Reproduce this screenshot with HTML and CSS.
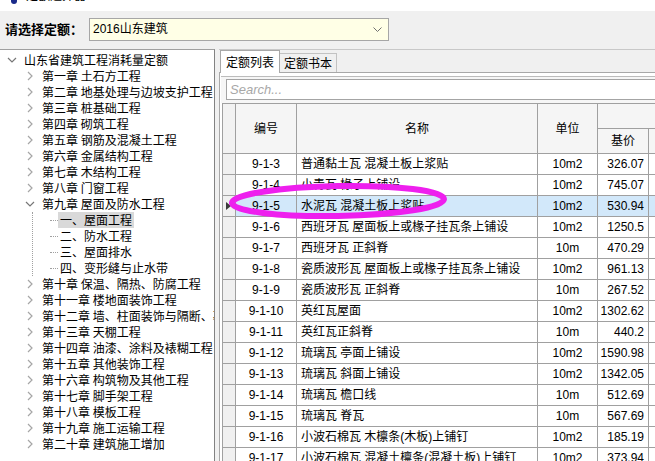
FILE: index.html
```html
<!DOCTYPE html>
<html lang="zh-CN">
<head>
<meta charset="utf-8">
<title>定额选择</title>
<link rel="stylesheet" href="styles.css">
</head>
<body>
<div class="titlebar">
  <div class="titlebar-inner"><span class="app-icon"></span><span class="title-text">定额选择器</span></div>
</div>
<div class="toolbar">
  <span class="label">请选择定额：</span>
  <div class="combo">
    <span class="combo-text">2016山东建筑</span>
    <svg class="combo-arrow" width="9" height="5" viewBox="0 0 9 5"><polyline points="0.5,0.5 4.5,4.5 8.5,0.5" fill="none" stroke="#707070" stroke-width="1"/></svg>
  </div>
</div>
<div class="main">
  <div class="tree">
    <div class="node lv0"><svg class="exp" width="14" height="16" viewBox="0 0 14 16"><polyline points="3,6 7,10 11,6" fill="none" stroke="#777" stroke-width="1.2"/></svg><span class="txt">山东省建筑工程消耗量定额</span></div>
    <div class="node lv1"><svg class="exp" width="14" height="16" viewBox="0 0 14 16"><polyline points="5,4 9,8 5,12" fill="none" stroke="#a6a6a6" stroke-width="1.2"/></svg><span class="txt">第一章 土石方工程</span></div>
    <div class="node lv1"><svg class="exp" width="14" height="16" viewBox="0 0 14 16"><polyline points="5,4 9,8 5,12" fill="none" stroke="#a6a6a6" stroke-width="1.2"/></svg><span class="txt">第二章 地基处理与边坡支护工程</span></div>
    <div class="node lv1"><svg class="exp" width="14" height="16" viewBox="0 0 14 16"><polyline points="5,4 9,8 5,12" fill="none" stroke="#a6a6a6" stroke-width="1.2"/></svg><span class="txt">第三章 桩基础工程</span></div>
    <div class="node lv1"><svg class="exp" width="14" height="16" viewBox="0 0 14 16"><polyline points="5,4 9,8 5,12" fill="none" stroke="#a6a6a6" stroke-width="1.2"/></svg><span class="txt">第四章 砌筑工程</span></div>
    <div class="node lv1"><svg class="exp" width="14" height="16" viewBox="0 0 14 16"><polyline points="5,4 9,8 5,12" fill="none" stroke="#a6a6a6" stroke-width="1.2"/></svg><span class="txt">第五章 钢筋及混凝土工程</span></div>
    <div class="node lv1"><svg class="exp" width="14" height="16" viewBox="0 0 14 16"><polyline points="5,4 9,8 5,12" fill="none" stroke="#a6a6a6" stroke-width="1.2"/></svg><span class="txt">第六章 金属结构工程</span></div>
    <div class="node lv1"><svg class="exp" width="14" height="16" viewBox="0 0 14 16"><polyline points="5,4 9,8 5,12" fill="none" stroke="#a6a6a6" stroke-width="1.2"/></svg><span class="txt">第七章 木结构工程</span></div>
    <div class="node lv1"><svg class="exp" width="14" height="16" viewBox="0 0 14 16"><polyline points="5,4 9,8 5,12" fill="none" stroke="#a6a6a6" stroke-width="1.2"/></svg><span class="txt">第八章 门窗工程</span></div>
    <div class="node lv1"><svg class="exp" width="14" height="16" viewBox="0 0 14 16"><polyline points="3,6 7,10 11,6" fill="none" stroke="#777" stroke-width="1.2"/></svg><span class="txt">第九章 屋面及防水工程</span></div>
    <div class="subtree">
      <div class="node lv2"><span class="stub"></span><span class="txt sel">一、屋面工程</span></div>
      <div class="node lv2"><span class="stub"></span><span class="txt">二、防水工程</span></div>
      <div class="node lv2"><span class="stub"></span><span class="txt">三、屋面排水</span></div>
      <div class="node lv2"><span class="stub"></span><span class="txt">四、变形缝与止水带</span></div>
    </div>
    <div class="node lv1"><svg class="exp" width="14" height="16" viewBox="0 0 14 16"><polyline points="5,4 9,8 5,12" fill="none" stroke="#a6a6a6" stroke-width="1.2"/></svg><span class="txt">第十章 保温、隔热、防腐工程</span></div>
    <div class="node lv1"><svg class="exp" width="14" height="16" viewBox="0 0 14 16"><polyline points="5,4 9,8 5,12" fill="none" stroke="#a6a6a6" stroke-width="1.2"/></svg><span class="txt">第十一章 楼地面装饰工程</span></div>
    <div class="node lv1"><svg class="exp" width="14" height="16" viewBox="0 0 14 16"><polyline points="5,4 9,8 5,12" fill="none" stroke="#a6a6a6" stroke-width="1.2"/></svg><span class="txt">第十二章 墙、柱面装饰与隔断、幕墙工程</span></div>
    <div class="node lv1"><svg class="exp" width="14" height="16" viewBox="0 0 14 16"><polyline points="5,4 9,8 5,12" fill="none" stroke="#a6a6a6" stroke-width="1.2"/></svg><span class="txt">第十三章 天棚工程</span></div>
    <div class="node lv1"><svg class="exp" width="14" height="16" viewBox="0 0 14 16"><polyline points="5,4 9,8 5,12" fill="none" stroke="#a6a6a6" stroke-width="1.2"/></svg><span class="txt">第十四章 油漆、涂料及裱糊工程</span></div>
    <div class="node lv1"><svg class="exp" width="14" height="16" viewBox="0 0 14 16"><polyline points="5,4 9,8 5,12" fill="none" stroke="#a6a6a6" stroke-width="1.2"/></svg><span class="txt">第十五章 其他装饰工程</span></div>
    <div class="node lv1"><svg class="exp" width="14" height="16" viewBox="0 0 14 16"><polyline points="5,4 9,8 5,12" fill="none" stroke="#a6a6a6" stroke-width="1.2"/></svg><span class="txt">第十六章 构筑物及其他工程</span></div>
    <div class="node lv1"><svg class="exp" width="14" height="16" viewBox="0 0 14 16"><polyline points="5,4 9,8 5,12" fill="none" stroke="#a6a6a6" stroke-width="1.2"/></svg><span class="txt">第十七章 脚手架工程</span></div>
    <div class="node lv1"><svg class="exp" width="14" height="16" viewBox="0 0 14 16"><polyline points="5,4 9,8 5,12" fill="none" stroke="#a6a6a6" stroke-width="1.2"/></svg><span class="txt">第十八章 模板工程</span></div>
    <div class="node lv1"><svg class="exp" width="14" height="16" viewBox="0 0 14 16"><polyline points="5,4 9,8 5,12" fill="none" stroke="#a6a6a6" stroke-width="1.2"/></svg><span class="txt">第十九章 施工运输工程</span></div>
    <div class="node lv1"><svg class="exp" width="14" height="16" viewBox="0 0 14 16"><polyline points="5,4 9,8 5,12" fill="none" stroke="#a6a6a6" stroke-width="1.2"/></svg><span class="txt">第二十章 建筑施工增加</span></div>
  </div>
  <div class="right">
    <div class="tabs">
      <div class="tab active">定额列表</div>
      <div class="tab">定额书本</div>
    </div>
    <div class="tabpage">
      <div class="searchbar"><div class="search">Search...</div></div>
      <div class="grid">
        <div class="c rh hdr-span"></div>
        <div class="c hd hdr-span">编号</div>
        <div class="c hd hdr-span">名称</div>
        <div class="c hd hdr-span">单位</div>
        <div class="c hd group"></div>
        <div class="c hd">基价</div>
        <div class="c hd"></div>

        <div class="c rh"></div><div class="c code">9-1-3</div><div class="c name">普通黏土瓦 混凝土板上浆贴</div><div class="c unit">10m2</div><div class="c num">326.07</div><div class="c"></div>
        <div class="c rh"></div><div class="c code">9-1-4</div><div class="c name">小青瓦 椽子上铺设</div><div class="c unit">10m2</div><div class="c num">745.07</div><div class="c"></div>
        <div class="c rh cur"><span class="tri"></span></div><div class="c code s">9-1-5</div><div class="c name s">水泥瓦 混凝土板上浆贴</div><div class="c unit s">10m2</div><div class="c num s">530.94</div><div class="c s"></div>
        <div class="c rh"></div><div class="c code">9-1-6</div><div class="c name">西班牙瓦 屋面板上或椽子挂瓦条上铺设</div><div class="c unit">10m2</div><div class="c num">1250.5</div><div class="c"></div>
        <div class="c rh"></div><div class="c code">9-1-7</div><div class="c name">西班牙瓦 正斜脊</div><div class="c unit">10m</div><div class="c num">470.29</div><div class="c"></div>
        <div class="c rh"></div><div class="c code">9-1-8</div><div class="c name">瓷质波形瓦 屋面板上或椽子挂瓦条上铺设</div><div class="c unit">10m2</div><div class="c num">961.13</div><div class="c"></div>
        <div class="c rh"></div><div class="c code">9-1-9</div><div class="c name">瓷质波形瓦 正斜脊</div><div class="c unit">10m</div><div class="c num">267.52</div><div class="c"></div>
        <div class="c rh"></div><div class="c code">9-1-10</div><div class="c name">英红瓦屋面</div><div class="c unit">10m2</div><div class="c num">1302.62</div><div class="c"></div>
        <div class="c rh"></div><div class="c code">9-1-11</div><div class="c name">英红瓦正斜脊</div><div class="c unit">10m</div><div class="c num">440.2</div><div class="c"></div>
        <div class="c rh"></div><div class="c code">9-1-12</div><div class="c name">琉璃瓦 亭面上铺设</div><div class="c unit">10m2</div><div class="c num">1590.98</div><div class="c"></div>
        <div class="c rh"></div><div class="c code">9-1-13</div><div class="c name">琉璃瓦 斜面上铺设</div><div class="c unit">10m2</div><div class="c num">1342.05</div><div class="c"></div>
        <div class="c rh"></div><div class="c code">9-1-14</div><div class="c name">琉璃瓦 檐口线</div><div class="c unit">10m</div><div class="c num">512.69</div><div class="c"></div>
        <div class="c rh"></div><div class="c code">9-1-15</div><div class="c name">琉璃瓦 脊瓦</div><div class="c unit">10m</div><div class="c num">567.69</div><div class="c"></div>
        <div class="c rh"></div><div class="c code">9-1-16</div><div class="c name">小波石棉瓦 木檩条(木板)上铺钉</div><div class="c unit">10m2</div><div class="c num">185.19</div><div class="c"></div>
        <div class="c rh"></div><div class="c code">9-1-17</div><div class="c name">小波石棉瓦 混凝土檩条(混凝土板)上铺钉</div><div class="c unit">10m2</div><div class="c num">373.94</div><div class="c"></div>
      </div>
    </div>
  </div>
</div>
<svg class="mark" width="240" height="50" viewBox="0 0 240 50"><ellipse cx="118" cy="23" rx="106" ry="15" transform="rotate(-1 118 23)" fill="none" stroke="#ee1fee" stroke-width="6"/></svg>
</body>
</html>
```
FILE: styles.css
```css
* { box-sizing: border-box; }
html, body { margin: 0; padding: 0; }
body {
  width: 655px;
  height: 461px;
  overflow: hidden;
  background: #f0f0f0;
  font-family: "Liberation Sans", "Noto Sans CJK SC", sans-serif;
  font-size: 12px;
  color: #000;
  position: relative;
}
.titlebar {
  height: 11px;
  background: #fff;
  overflow: hidden;
}
.titlebar-inner {
  margin-top: -12px;
  height: 16px;
  display: flex;
  align-items: center;
  padding-left: 11px;
  gap: 9px;
  line-height: 16px;
}
.app-icon {
  width: 6px;
  height: 16px;
  background: #1a2a8a;
  border-radius: 0 0 3px 3px;
}
.title-text { font-size: 12px; color: #000; }

.toolbar {
  height: 38px;
  display: flex;
  align-items: center;
  padding-left: 5px;
  padding-bottom: 2px;
}
.label {
  font-family: "Noto Sans CJK SC", sans-serif;
  font-weight: bold;
  font-size: 13px;
  width: 84px;
  line-height: 16px;
}
.combo {
  width: 300px;
  height: 23px;
  border: 1px solid #a6a6a6;
  background: #ffffe6;
  display: flex;
  align-items: center;
  justify-content: space-between;
  padding: 0 6px 0 3px;
}
.combo-text { font-size: 12px; line-height: 16px; }

.main {
  display: flex;
  height: 412px;
}
.tree {
  width: 215px;
  flex: none;
  background: #fff;
  border-top: 1px solid #a0a0a0;
  border-right: 1px solid #828282;
  padding-top: 2px;
  overflow: hidden;
  font-family: "Noto Sans CJK SC", sans-serif;
}
.node {
  height: 16px;
  display: flex;
  align-items: center;
  white-space: nowrap;
  line-height: 16px;
}
.exp { flex: none; }
.node .txt { margin-left: 5px; }
.lv0 { padding-left: 5px; }
.lv1 { padding-left: 23px; }
.lv1 .txt { margin-left: 5px; }
.subtree {
  margin-left: 32px;
  border-left: 1px dotted #a0a0a0;
}
.lv2 { padding-left: 17px; }
.stub {
  width: 8px;
  border-top: 1px dotted #a0a0a0;
}
.lv2 .txt { margin-left: 0; padding: 0 2px; }
.txt.sel { background: #d9d9d9; }

.right {
  flex: 1;
  margin-left: 4px;
  display: flex;
  flex-direction: column;
  min-width: 0;
  border-top: 1px solid #c8c8c8;
}
.tabs {
  height: 22px;
  display: flex;
  align-items: flex-end;
  padding-left: 1px;
  font-family: "Noto Sans CJK SC", sans-serif;
}
.tab {
  height: 19px;
  padding: 0 4px;
  border: 1px solid #c2c2c2;
  border-bottom: none;
  background: #f0f0f0;
  line-height: 18px;
  margin-left: -1px;
}
.tab.active {
  height: 23px;
  margin-bottom: -1px;
  background: #fff;
  border-color: #a8a8a8;
  padding: 0 5px;
  line-height: 22px;
  position: relative;
  z-index: 1;
  margin-left: 0;
}
.tabpage {
  flex: 1;
  border-top: 1px solid #a8a8a8;
  border-left: 1px solid #a8a8a8;
  background: #fff;
  padding: 3px 0 0 1px;
  overflow: hidden;
}
.searchbar {
  border-top: 1px solid #bcbcbc;
  background: #f6f6f6;
  padding: 2px 0 3px 5px;
}
.search {
  height: 21px;
  border: 1px solid #a4a4a4;
  border-right: none;
  background: #fff;
  color: #a8a8a8;
  font-style: italic;
  font-size: 13px;
  padding-left: 3px;
  line-height: 19px;
}
.grid {
  display: grid;
  grid-template-columns: 13px 61px 241px 60px 51px 80px;
  grid-template-rows: 25px 25px;
  grid-auto-rows: 21px;
  border-top: 1px solid #a0a0a0;
  border-left: 1px solid #a0a0a0;
  margin-left: 1px;
  width: max-content;
}
.c {
  border-right: 1px solid #a0a0a0;
  border-bottom: 1px solid #a0a0a0;
  display: flex;
  align-items: center;
  white-space: nowrap;
  overflow: hidden;
  background: #fff;
  line-height: 16px;
}
.hd {
  background: #f5f5f5;
  justify-content: center;
}
.hdr-span { grid-row: span 2; }
.group { grid-column: span 2; }
.rh { background: #f0f0f0; }
.rh.hdr-span { background: #f2f2f2; }
.code { justify-content: center; }
.name { padding-left: 4px; }
.unit { justify-content: center; }
.num { justify-content: flex-end; padding-right: 4px; }
.s { background: #d2e8fa; }
.cur { padding-left: 3px; }
.tri {
  width: 0;
  height: 0;
  border-top: 4.5px solid transparent;
  border-bottom: 4.5px solid transparent;
  border-left: 5px solid #3c3c3c;
}
.mark {
  position: absolute;
  left: 220px;
  top: 178px;
}
```
